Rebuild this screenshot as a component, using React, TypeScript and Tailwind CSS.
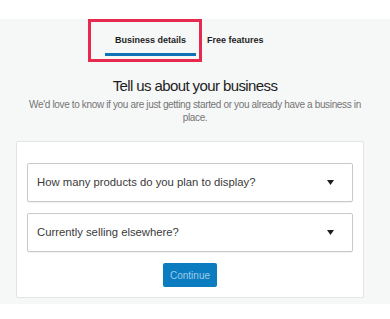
function Select({ label }: { label: string }) {
  return (
    <div className="flex h-[39px] items-center justify-between rounded-[2px] border border-[#c9c9c9] bg-white pl-[9px] pr-[18px] shadow-[0_1px_1px_rgba(0,0,0,0.06)]">
      <span className="text-[11.3px] text-[#3a3a3a]">{label}</span>
      <svg width="7" height="5" viewBox="0 0 7 5">
        <path d="M0 0h7L3.5 5z" fill="#1e1e1e" />
      </svg>
    </div>
  );
}

export default function App() {
  return (
    <div className="h-[319px] w-[390px] overflow-hidden bg-white font-['Liberation_Sans',Arial,sans-serif]">
      <div className="h-[19px]" />
      <div className="h-[285px] bg-[#f6f7f7]">
        <div className="relative flex pl-[105px]">
          <div className="border-b-[3px] border-[#1172b8] px-[10px] pb-[7px] pt-[16px] text-[9px] leading-[11px] font-bold text-[#1e1e1e]">
            Business details
          </div>
          <div className="px-[11px] pb-[10px] pt-[16px] text-[9px] leading-[11px] font-bold text-[#1e1e1e]">
            Free features
          </div>
          <div className="absolute left-[88px] top-0 h-[43px] w-[114px] border-[3px] border-[#e8294f]" />
        </div>

        <h1 className="mt-[21px] text-center text-[15px] leading-[18px] tracking-[-0.6px] text-[#1e1e1e]">
          Tell us about your business
        </h1>
        <p className="mx-auto mt-[2.5px] w-[348px] text-center text-[10px] leading-[13px] tracking-[-0.35px] text-[#757575]">
          We'd love to know if you are just getting started or you already have a business in place.
        </p>

        <div className="ml-4 mt-[17.5px] flex w-[348px] flex-col gap-[11px] rounded-[2px] border border-[#e4e4e4] bg-white px-[10px] pb-[10px] pt-[21px]">
          <Select label="How many products do you plan to display?" />
          <Select label="Currently selling elsewhere?" />
          <div className="flex justify-center">
            <button className="h-[24px] w-[54px] rounded-[2px] bg-[#0c7cc1] text-[10px] text-[#9ccbea]">
              Continue
            </button>
          </div>
        </div>
      </div>
    </div>
  );
}
